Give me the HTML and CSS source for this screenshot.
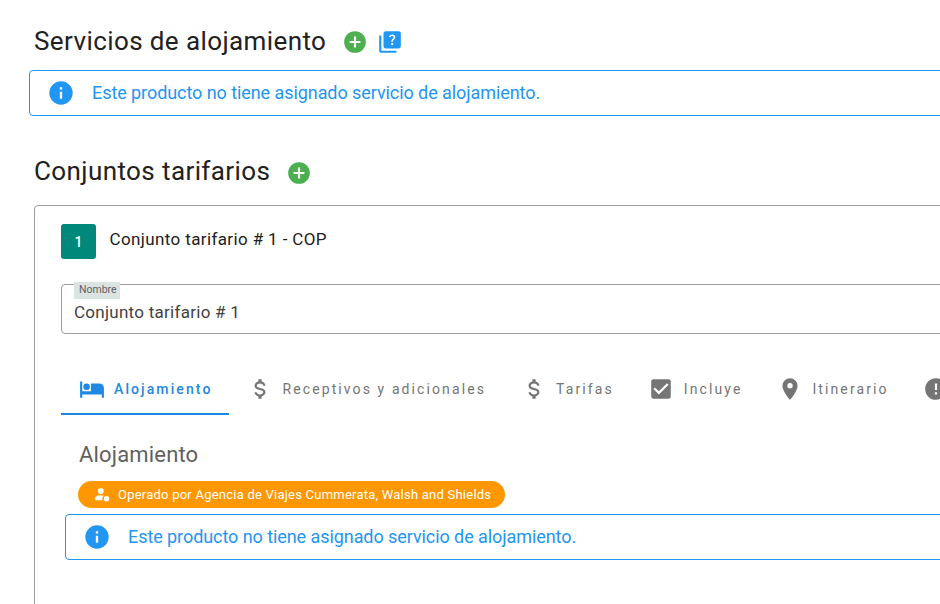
FILE: index.html
```html
<!DOCTYPE html>
<html lang="es">
<head>
<meta charset="utf-8">
<title>Servicios de alojamiento</title>
<link rel="stylesheet" href="styles.css">
</head>
<body>
<main class="page">
  <div class="heading heading-first">
    <h2 class="title">Servicios de alojamiento</h2>
    <svg class="icon-add" viewBox="0 0 24 24"><path d="M17 13h-4v4h-2v-4H7v-2h4V7h2v4h4m-5-9A10 10 0 0 0 2 12a10 10 0 0 0 10 10 10 10 0 0 0 10-10A10 10 0 0 0 12 2z"/></svg>
    <svg class="icon-help" viewBox="0 0 24 24"><path d="M4 6H2v14c0 1.100.9 2 2 2h14v-2H4V6zM20 2H8C6.900 2 6 2.900 6 4v12c0 1.100.9 2 2 2h12c1.100 0 2-.9 2-2V4C22 2.900 21.100 2 20 2zM14.010 15c-.59 0-1.050-.47-1.050-1.050 0-.59.47-1.040 1.050-1.040.59 0 1.040.45 1.040 1.040C15.040 14.530 14.600 15 14.010 15zM16.510 8.830c-.63.93-1.230 1.210-1.560 1.810-.13.24-.18.4-.18 1.180h-1.520c0-.41-.06-1.080.26-1.650.41-.73 1.180-1.160 1.630-1.800.48-.68.21-1.940-1.140-1.940-.88 0-1.320.67-1.500 1.230l-1.370-.57C11.510 5.960 12.520 5 13.990 5c1.230 0 2.080.56 2.510 1.260C16.870 6.870 17.080 7.990 16.510 8.830z"/></svg>
  </div>
  <div class="alert alert-top">
    <svg class="icon-info" viewBox="0 0 24 24"><path d="M13 9h-2V7h2m0 10h-2v-6h2m-1-9A10 10 0 0 0 2 12a10 10 0 0 0 10 10 10 10 0 0 0 10-10A10 10 0 0 0 12 2z"/></svg>
    <span class="alert-text">Este producto no tiene asignado servicio de alojamiento.</span>
  </div>
  <div class="heading heading-second">
    <h2 class="title">Conjuntos tarifarios</h2>
    <svg class="icon-add" viewBox="0 0 24 24"><path d="M17 13h-4v4h-2v-4H7v-2h4V7h2v4h4m-5-9A10 10 0 0 0 2 12a10 10 0 0 0 10 10 10 10 0 0 0 10-10A10 10 0 0 0 12 2z"/></svg>
  </div>
  <section class="card">
    <div class="card-head">
      <div class="num">1</div>
      <div class="card-title">Conjunto tarifario # 1 - COP</div>
    </div>
    <div class="field">
      <label class="field-label">Nombre</label>
      <div class="field-value">Conjunto tarifario # 1</div>
    </div>
    <nav class="tabs">
      <div class="tab tab-active">
        <svg viewBox="0 0 24 24"><path d="M19 7h-8v7H3V5H1v15h2v-3h18v3h2v-9a4 4 0 0 0-4-4M7 13a3 3 0 0 0 3-3 3 3 0 0 0-3-3 3 3 0 0 0-3 3 3 3 0 0 0 3 3z"/></svg>
        <span>Alojamiento</span>
      </div>
      <div class="tab">
        <svg viewBox="0 0 24 24"><path d="M7 15h2c0 1.080 1.370 2 3 2s3-.92 3-2c0-1.100-1.040-1.500-3.240-2.030C9.640 12.440 7 11.780 7 9c0-1.790 1.470-3.310 3.500-3.820V3h3v2.180C15.530 5.690 17 7.210 17 9h-2c0-1.080-1.370-2-3-2s-3 .92-3 2c0 1.100 1.040 1.500 3.240 2.030C14.360 11.560 17 12.220 17 15c0 1.790-1.470 3.310-3.500 3.820V21h-3v-2.180C8.470 18.310 7 16.790 7 15z"/></svg>
        <span>Receptivos y adicionales</span>
      </div>
      <div class="tab">
        <svg viewBox="0 0 24 24"><path d="M7 15h2c0 1.080 1.370 2 3 2s3-.92 3-2c0-1.100-1.040-1.500-3.240-2.030C9.640 12.440 7 11.780 7 9c0-1.790 1.470-3.310 3.500-3.820V3h3v2.180C15.530 5.690 17 7.210 17 9h-2c0-1.080-1.370-2-3-2s-3 .92-3 2c0 1.100 1.040 1.500 3.240 2.030C14.360 11.560 17 12.220 17 15c0 1.790-1.470 3.310-3.500 3.820V21h-3v-2.180C8.470 18.310 7 16.790 7 15z"/></svg>
        <span>Tarifas</span>
      </div>
      <div class="tab">
        <svg viewBox="0 0 24 24"><path d="M10 17l-5-5 1.410-1.420L10 14.170l7.590-7.590L19 8m0-5H5c-1.110 0-2 .89-2 2v14a2 2 0 0 0 2 2h14a2 2 0 0 0 2-2V5a2 2 0 0 0-2-2z"/></svg>
        <span>Incluye</span>
      </div>
      <div class="tab">
        <svg viewBox="0 0 24 24"><path d="M12 11.500A2.500 2.500 0 0 1 9.500 9 2.500 2.500 0 0 1 12 6.500 2.500 2.500 0 0 1 14.500 9a2.500 2.500 0 0 1-2.500 2.500M12 2a7 7 0 0 0-7 7c0 5.250 7 13 7 13s7-7.750 7-13a7 7 0 0 0-7-7z"/></svg>
        <span>Itinerario</span>
      </div>
      <div class="tab">
        <svg viewBox="0 0 24 24"><path d="M13 13h-2V7h2m0 10h-2v-2h2M12 2A10 10 0 0 0 2 12a10 10 0 0 0 10 10 10 10 0 0 0 10-10A10 10 0 0 0 12 2z"/></svg>
      </div>
    </nav>
    <div class="pane">
      <h3 class="pane-title">Alojamiento</h3>
      <div class="chip">
        <svg viewBox="0 0 24 24"><circle cx="11" cy="7" r="4.200"/><path d="M11 13c-4.500 0-8 2-8 4.200V20h10.500a5.500 5.500 0 0 1 1.800-6.300C14 13.300 12.500 13 11 13z"/><circle cx="19" cy="18" r="3.800"/></svg>
        <span>Operado por Agencia de Viajes Cummerata, Walsh and Shields</span>
      </div>
      <div class="alert alert-inner">
        <svg class="icon-info" viewBox="0 0 24 24"><path d="M13 9h-2V7h2m0 10h-2v-6h2m-1-9A10 10 0 0 0 2 12a10 10 0 0 0 10 10 10 10 0 0 0 10-10A10 10 0 0 0 12 2z"/></svg>
        <span class="alert-text">Este producto no tiene asignado servicio de alojamiento.</span>
      </div>
    </div>
  </section>
</main>
</body>
</html>
```
FILE: styles.css
```css
html, body {
  margin: 0;
  padding: 0;
  width: 940px;
  height: 604px;
  overflow: hidden;
  background: #fff;
}
body {
  font-family: Roboto, "Liberation Sans", sans-serif;
  color: #212121;
}
.page {
  width: 1200px;
  padding: 22px 0 0 29px;
  box-sizing: border-box;
}
.heading {
  display: flex;
  align-items: center;
  height: 40px;
  margin-left: 5px;
}
.title {
  margin: -2px 0 0;
  font-size: 26px;
  font-weight: 400;
  line-height: 40px;
  letter-spacing: .4px;
  color: #212121;
}
.icon-add {
  width: 26px;
  height: 26px;
  margin-left: 16px;
  fill: #4caf50;
  flex: none;
}
.icon-help {
  width: 26px;
  height: 26px;
  margin-left: 9px;
  fill: #2196f3;
  flex: none;
}
.heading-second {
  margin-top: 36px;
}
.heading-second .icon-add {
  margin-top: 1px;
}
.alert {
  display: flex;
  align-items: center;
  box-sizing: border-box;
  height: 46px;
  border: 1px solid #2196f3;
  border-radius: 4px;
  color: #2196f3;
  font-size: 18px;
  letter-spacing: -.07px;
  width: 1100px;
}
.alert-text {
  margin-top: -2px;
}
.alert-top {
  margin-top: 8px;
  padding-left: 17px;
}
.icon-info {
  width: 28px;
  height: 28px;
  fill: #2196f3;
  margin-right: 17px;
  flex: none;
}
.card {
  box-sizing: border-box;
  margin-top: 13px;
  margin-left: 5px;
  width: 1100px;
  height: 500px;
  border: 1px solid #9e9e9e;
  border-radius: 4px;
  padding: 18px 26px;
}
.card-head {
  display: flex;
  align-items: center;
  height: 35px;
}
.num {
  width: 35px;
  height: 35px;
  background: #00897b;
  border-radius: 3px;
  color: #fff;
  font-size: 14px;
  font-weight: 500;
  display: flex;
  align-items: center;
  justify-content: center;
}
.card-title {
  margin-left: 13.500px;
  font-size: 17px;
  font-weight: 400;
  letter-spacing: .38px;
  color: #212121;
  margin-top: -5px;
}
.field {
  position: relative;
  box-sizing: border-box;
  margin-top: 25px;
  height: 50px;
  border: 1px solid #9e9e9e;
  border-radius: 4px;
  padding: 16px 12px 0;
}
.field-label {
  position: absolute;
  left: 12px;
  top: -3px;
  height: 17px;
  line-height: 15px;
  padding: 0 3px 0 5px;
  background: #dce3e3;
  font-size: 10.500px;
  color: #616161;
}
.field-value {
  font-size: 17px;
  line-height: 22px;
  letter-spacing: .27px;
  color: #424242;
}
.tabs {
  display: flex;
  margin-top: 31px;
  height: 50px;
}
.tab {
  display: flex;
  align-items: center;
  box-sizing: border-box;
  height: 50px;
  padding: 0 17px 3px 17.500px;
  color: #757575;
  font-size: 14px;
  font-weight: 400;
  letter-spacing: 2.100px;
  white-space: nowrap;
  flex: none;
}
.tab svg {
  width: 26px;
  height: 26px;
  fill: #757575;
  margin-right: 9.500px;
  flex: none;
}
.tab-active {
  color: #1e88e5;
  font-weight: 500;
  padding-bottom: 1px;
  border-bottom: 2px solid #1e88e5;
}
.tab-active svg {
  fill: #1e88e5;
}
.pane {
  padding: 0 4px;
}
.pane-title {
  margin: 26px 0 0 14px;
  font-size: 22px;
  line-height: 28px;
  font-weight: 400;
  letter-spacing: .17px;
  color: #616161;
}
.chip {
  display: inline-flex;
  align-items: center;
  box-sizing: border-box;
  height: 27px;
  margin: 12px 0 0 13px;
  padding: 0 14px 0 15px;
  background: #ff9800;
  border-radius: 14px;
  color: #fff;
  font-size: 13px;
  font-weight: 400;
  letter-spacing: .23px;
  white-space: nowrap;
  vertical-align: top;
}
.chip svg {
  width: 17px;
  height: 17px;
  fill: #fff;
  margin-right: 8px;
  flex: none;
}
.alert-inner {
  margin-top: 6px;
  padding-left: 17px;
}
```
